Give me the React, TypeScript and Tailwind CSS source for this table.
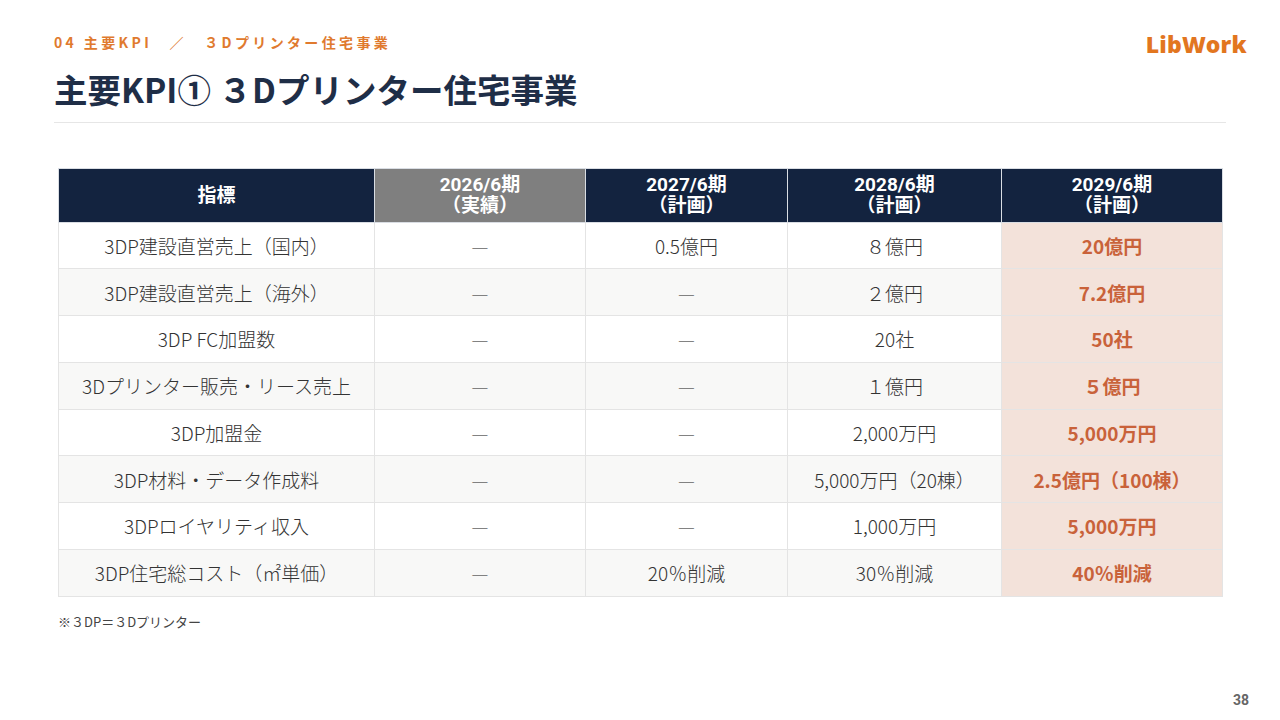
const rows: [string, string, string, string, string][] = [
  ['3DP建設直営売上（国内）', '—', '0.5億円', '８億円', '20億円'],
  ['3DP建設直営売上（海外）', '—', '—', '２億円', '7.2億円'],
  ['3DP FC加盟数', '—', '—', '20社', '50社'],
  ['3Dプリンター販売・リース売上', '—', '—', '１億円', '５億円'],
  ['3DP加盟金', '—', '—', '2,000万円', '5,000万円'],
  ['3DP材料・データ作成料', '—', '—', '5,000万円（20棟）', '2.5億円（100棟）'],
  ['3DPロイヤリティ収入', '—', '—', '1,000万円', '5,000万円'],
  ['3DP住宅総コスト（㎡単価）', '—', '20％削減', '30％削減', '40％削減'],
]

const heads: [string, string][] = [
  ['2027/6期', '（計画）'],
  ['2028/6期', '（計画）'],
  ['2029/6期', '（計画）'],
]

export default function App() {
  return (
    <div className="w-[1280px] h-[720px] bg-white relative overflow-hidden font-['Noto_Sans_CJK_JP',sans-serif]">
      {/* Header */}
      <div className="px-[54px] pt-[35px]">
        <div className="flex justify-between items-start">
          <p className="text-[14px] font-bold text-[#e07a2e] tracking-[0.24em] leading-none">
            04 主要KPI　／　３Dプリンター住宅事業
          </p>
          <p className="text-[23px] font-black text-[#e2761f] leading-none font-['Noto_Sans',sans-serif] -mt-[2px] mr-[-21px] tracking-[0.01em]">
            LibWork
          </p>
        </div>
        <h1 className="mt-[16px] text-[33.5px] font-bold text-[#1f2e47] leading-none">主要KPI① ３Dプリンター住宅事業</h1>
        <div className="mt-[16px] h-px bg-[#e6e6e6]" />
      </div>

      {/* Table */}
      <div className="px-[58px] mt-[45px]">
        <table className="w-[1165px] border-collapse text-[19px] text-[#333]">
          <thead>
            <tr className="h-[54px] text-white font-bold leading-[21px] font-['Roboto','Noto_Sans_CJK_JP',sans-serif] text-[19px]">
              <th className="w-[316px] bg-[#13233f] border border-[#d9dde3]">指標</th>
              <th className="w-[211px] bg-[#7f7f7f] border border-[#d9dde3]">
                2026/6期<br />（実績）
              </th>
              {heads.map(([a, b], i) => (
                <th
                  key={a}
                  className={`bg-[#13233f] border border-[#d9dde3] ${i === 0 ? 'w-[202px]' : i === 1 ? 'w-[214px]' : 'w-[221px]'}`}
                >
                  {a}<br />{b}
                </th>
              ))}
            </tr>
          </thead>
          <tbody>
            {rows.map((r, i) => (
              <tr key={r[0]} className={`h-[46.75px] ${i % 2 === 1 ? 'bg-[#f8f8f7]' : 'bg-white'}`}>
                {r.slice(0, 4).map((c, j) => (
                  <td key={j} className="text-center border border-[#e4e4e4] text-[#333] font-light leading-none">
                    {c === '—' ? <span className="text-[#666]">—</span> : c}
                  </td>
                ))}
                <td className="text-center border border-[#e4e4e4] bg-[#f3e2da] text-[#c9623a] font-bold leading-none">{r[4]}</td>
              </tr>
            ))}
          </tbody>
        </table>
        <p className="mt-[15px] text-[13px] text-[#444]">※３DP＝３Dプリンター</p>
      </div>

      <p className="absolute right-[31px] bottom-[9px] text-[14px] font-bold text-[#666] font-['Roboto',sans-serif]">38</p>
    </div>
  )
}
